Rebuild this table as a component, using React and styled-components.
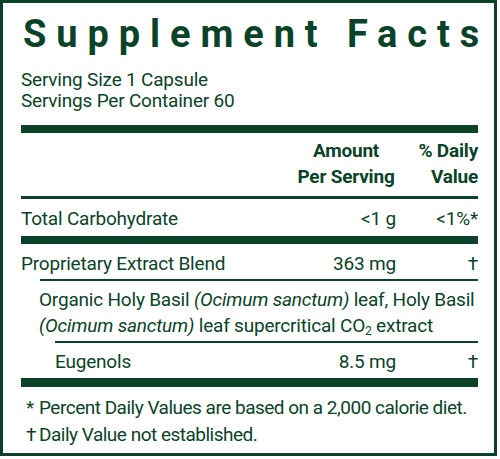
import React from "react";
import styled, { createGlobalStyle } from "styled-components";

const GREEN = "#0a4328";

const GlobalStyle = createGlobalStyle`
  html, body {
    margin: 0;
    padding: 0;
    background: #ffffff;
  }
  body {
    font-family: Roboto, "Liberation Sans", sans-serif;
    color: ${GREEN};
  }
`;

const Label = styled.div`
  box-sizing: border-box;
  width: 497px;
  height: 456px;
  border: 3px solid ${GREEN};
  padding: 12px 16px 0 18px;
  display: flex;
  flex-direction: column;
`;

const Title = styled.h1`
  margin: 0;
  font-size: 38px;
  line-height: 38px;
  font-weight: 700;
  letter-spacing: 9.9px;
  padding-left: 2px;
  white-space: nowrap;
`;

const Serving = styled.div`
  margin-top: 16px;
  font-size: 19px;
  line-height: 21px;
  letter-spacing: -0.2px;
`;

const Rule = styled.div`
  height: ${(p) => p.$weight}px;
  margin-left: ${(p) => p.$indent || 0}px;
  background: ${GREEN};
  flex-shrink: 0;
`;

const Row = styled.div`
  display: grid;
  grid-template-columns: 1fr 100px 82px;
  align-items: end;
  padding: ${(p) => p.$pad};
  padding-left: ${(p) => p.$indent || 0}px;
  font-size: 19px;
  line-height: 26px;
  letter-spacing: -0.2px;
  font-weight: ${(p) => (p.$bold ? 700 : 400)};
`;

const Name = styled.div``;

const Amount = styled.div`
  text-align: ${(p) => (p.$center ? "center" : "right")};
  white-space: nowrap;
`;

const Daily = styled.div`
  text-align: right;
  white-space: nowrap;
`;

const Blend = styled.div`
  padding: 6px 0 2.5px ${(p) => p.$indent}px;
  font-size: 19px;
  line-height: 26px;
  letter-spacing: -0.2px;
  white-space: nowrap;
`;

const Sub = styled.sub`
  font-size: 12px;
  vertical-align: -3px;
  line-height: 0;
`;

const Notes = styled.div`
  padding: 6.5px 0 0 5px;
  font-size: 19px;
  line-height: 27px;
  letter-spacing: -0.5px;
`;

const Note = styled.div`
  display: grid;
  grid-template-columns: 13px 1fr;
  white-space: nowrap;
`;

export default function App() {
  return (
    <>
      <GlobalStyle />
      <Label>
        <Title>Supplement Facts</Title>
        <Serving>
          <div>Serving Size 1 Capsule</div>
          <div>Servings Per Container 60</div>
        </Serving>
        <Rule $weight={8} style={{ marginTop: 14 }} />
        <Row $bold $pad="4.5px 0 6.5px">
          <Name />
          <Amount $center>
            Amount
            <br />
            Per Serving
          </Amount>
          <Daily>
            % Daily
            <br />
            Value
          </Daily>
        </Row>
        <Rule $weight={3} />
        <Row $pad="6.5px 0 4.5px">
          <Name>Total Carbohydrate</Name>
          <Amount>&lt;1 g</Amount>
          <Daily>&lt;1%*</Daily>
        </Row>
        <Rule $weight={8} />
        <Row $pad="6.5px 0 2.5px">
          <Name>Proprietary Extract Blend</Name>
          <Amount>363 mg</Amount>
          <Daily>†</Daily>
        </Row>
        <Rule $weight={1.5} $indent={19} />
        <Blend $indent={18}>
          Organic Holy Basil <i>(Ocimum sanctum)</i> leaf, Holy Basil
          <br />
          <i>(Ocimum sanctum)</i> leaf supercritical CO<Sub>2</Sub> extract
        </Blend>
        <Rule $weight={1.5} $indent={34} />
        <Row $indent={34} $pad="6px 0 3.5px">
          <Name>Eugenols</Name>
          <Amount>8.5 mg</Amount>
          <Daily>†</Daily>
        </Row>
        <Rule $weight={9} />
        <Notes>
          <Note>
            <span>*</span>
            <span>Percent Daily Values are based on a 2,000 calorie diet.</span>
          </Note>
          <Note>
            <span>†</span>
            <span>Daily Value not established.</span>
          </Note>
        </Notes>
      </Label>
    </>
  );
}
